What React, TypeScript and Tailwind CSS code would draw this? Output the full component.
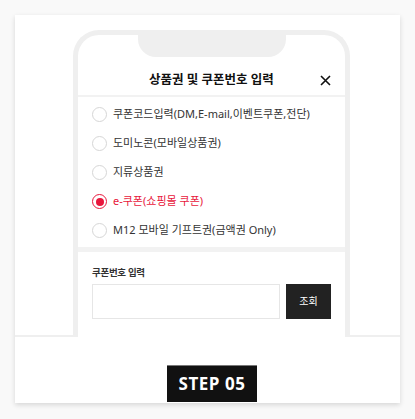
import React from 'react'

const options = [
  { label: '쿠폰코드입력(DM,E-mail,이벤트쿠폰,전단)', checked: false },
  { label: '도미노콘(모바일상품권)', checked: false },
  { label: '지류상품권', checked: false },
  { label: 'e-쿠폰(쇼핑몰 쿠폰)', checked: true },
  { label: 'M12 모바일 기프트권(금액권 Only)', checked: false },
]

function Radio({ checked }: { checked: boolean }) {
  if (checked) {
    return (
      <span className="w-[15px] h-[15px] rounded-full border-[1.5px] border-[#e8173c] flex items-center justify-center shrink-0">
        <span className="w-[8px] h-[8px] rounded-full bg-[#e8173c]" />
      </span>
    )
  }
  return <span className="w-[15px] h-[15px] rounded-full border border-[#d6d6d6] bg-white shrink-0" />
}

export default function App() {
  return (
    <div
      className="w-[415px] h-[419px] bg-[#f9f9f9] pt-[15px] pl-[15px]"
      style={{ fontFamily: '"Noto Sans", "Noto Sans CJK KR", sans-serif' }}
    >
      <div className="w-[385px] h-[388px] bg-white shadow-[0_2px_5px_rgba(0,0,0,0.14)] flex flex-col">
        {/* phone */}
        <div className="h-[322px] pt-[15px] pl-[58px] border-b-2 border-[#efefef]">
          <div className="relative w-[277px] h-[307px] border-[5px] border-b-0 border-[#efefef] rounded-t-[26px] bg-white flex flex-col overflow-hidden">
            <div className="absolute left-[60px] top-0 w-[148px] h-[22px] bg-[#efefef] rounded-b-[18px]" />
            <div className="h-[60px] shrink-0 relative flex justify-center pt-[38px]">
              <span className="text-[12.5px] leading-[14px] font-bold text-[#111]">상품권 및 쿠폰번호 입력</span>
              <svg className="absolute right-[14px] top-[40px]" width="11" height="11" viewBox="0 0 11 11">
                <path d="M1 1L10 10M10 1L1 10" stroke="#111" strokeWidth="1.6" />
              </svg>
            </div>
            <div className="h-[2px] bg-[#f2f2f2] shrink-0" />
            <div className="flex flex-col px-[14px] pt-[3px] pb-[2px]">
              {options.map((o, i) => (
                <div key={i} className="h-[29px] flex items-center gap-[6px]">
                  <Radio checked={o.checked} />
                  <span className={`text-[11px] ${o.checked ? 'text-[#e8173c]' : 'text-[#333]'}`}>{o.label}</span>
                </div>
              ))}
            </div>
            <div className="h-[5px] bg-[#f2f2f2] shrink-0" />
            <div className="px-[14px] pt-[15px]">
              <div className="text-[9.5px] leading-[12px] font-bold text-[#333] tracking-[-0.3px]">쿠폰번호 입력</div>
              <div className="flex gap-[6px] mt-[5px]">
                <div className="w-[188px] h-[35px] border border-[#e6e6e6] bg-white" />
                <div className="w-[45px] h-[35px] bg-[#222] flex items-center justify-center text-[10px] text-white">조회</div>
              </div>
            </div>
          </div>
        </div>
        {/* step */}
        <div className="flex-1 flex items-end pl-[152px] pb-[1px]">
          <div className="w-[90px] h-[37px] bg-[#111] border-t border-[#777] flex items-center justify-center">
            <span className="text-white text-[17px] font-bold tracking-[0.5px]" style={{ fontFamily: '"Open Sans", sans-serif' }}>STEP 05</span>
          </div>
        </div>
      </div>
    </div>
  )
}
